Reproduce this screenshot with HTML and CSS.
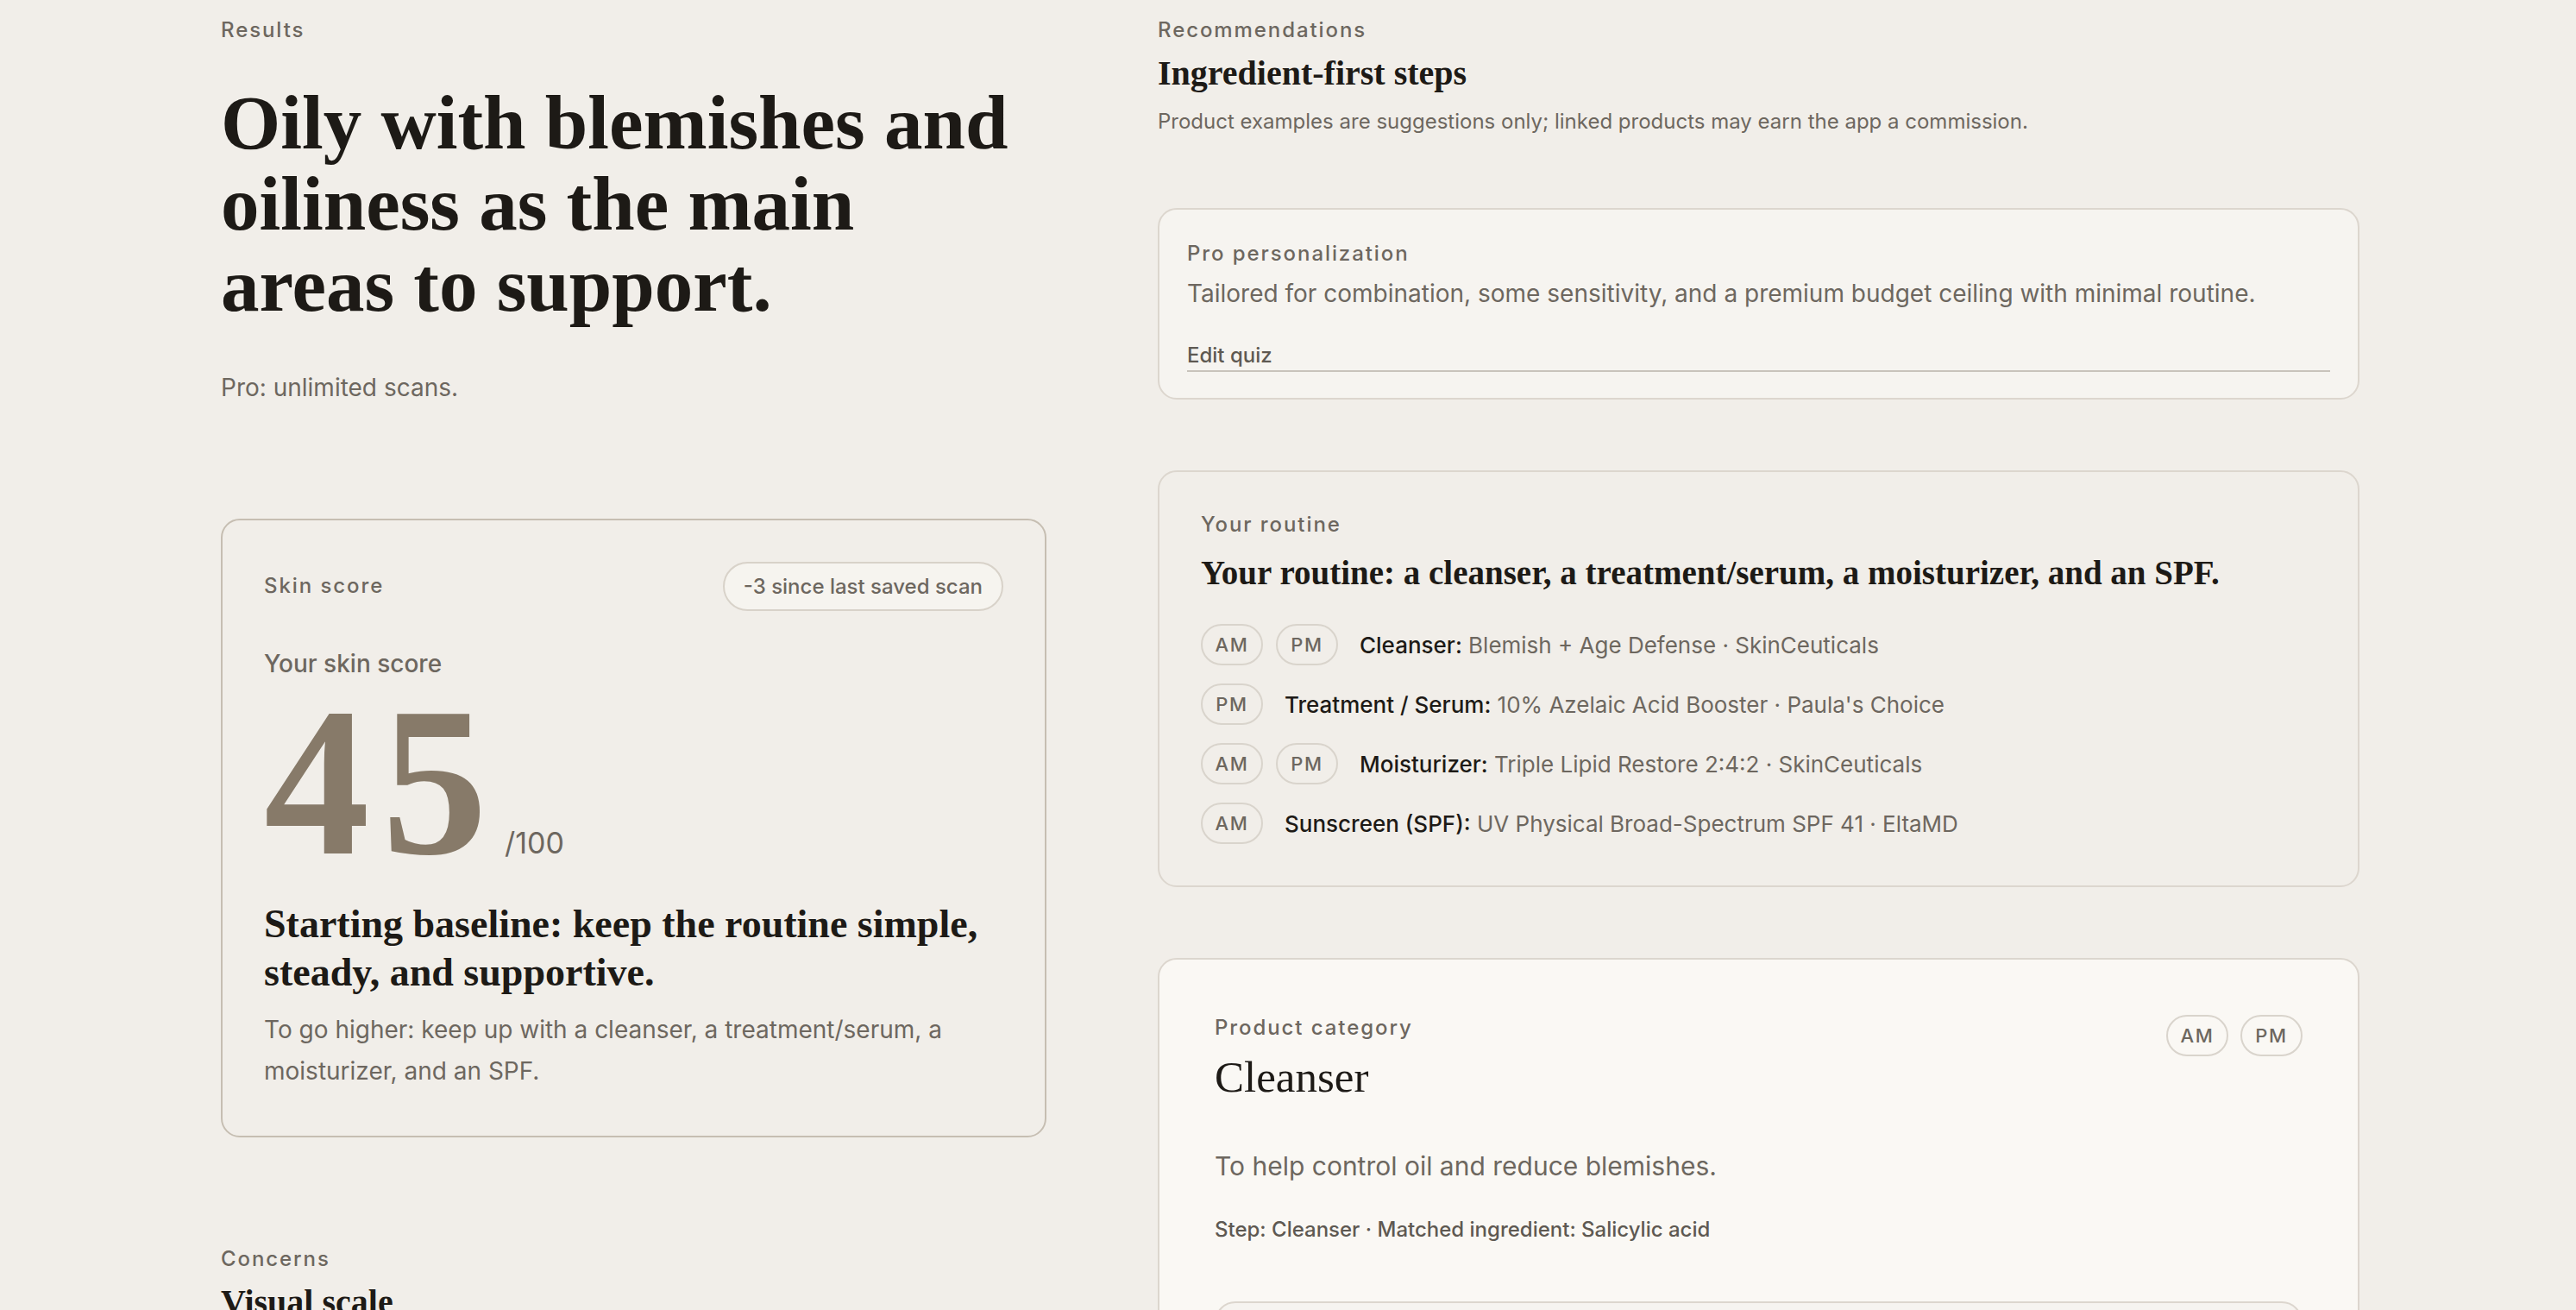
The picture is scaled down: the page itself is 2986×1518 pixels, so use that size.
FILE: index.html
```html
<!DOCTYPE html>
<html lang="en">
<head>
    <meta charset="UTF-8">
    <meta name="viewport" content="width=device-width, initial-scale=1.0">
    <title>Your Results</title>
    <link rel="stylesheet" href="styles.css">
</head>
<body>
    <main class="results-page">
        <!-- Left column: summary and score -->
        <section class="results-col">
            <header class="intro">
                <p class="eyebrow">Results</p>
                <h1 class="headline">Oily with blemishes and oiliness as the main areas to support.</h1>
                <p class="plan-note">Pro: unlimited scans.</p>
            </header>

            <article class="score-card">
                <div class="score-head">
                    <p class="eyebrow">Skin score</p>
                    <span class="chip">-3 since last saved scan</span>
                </div>
                <p class="score-label">Your skin score</p>
                <div class="score-value">
                    <span class="score-num">45</span>
                    <span class="score-max">/100</span>
                </div>
                <p class="score-summary">Starting baseline: keep the routine simple, steady, and supportive.</p>
                <p class="score-advice">To go higher: keep up with a cleanser, a treatment/serum, a moisturizer, and an SPF.</p>
            </article>

            <section class="concerns">
                <p class="eyebrow">Concerns</p>
                <h2 class="section-title">Visual scale</h2>
            </section>
        </section>

        <!-- Right column: recommendations -->
        <section class="recs-col">
            <header class="recs-head">
                <p class="eyebrow">Recommendations</p>
                <h2 class="section-title">Ingredient-first steps</h2>
                <p class="disclosure">Product examples are suggestions only; linked products may earn the app a commission.</p>
            </header>

            <div class="pro-card">
                <p class="eyebrow">Pro personalization</p>
                <p class="pro-text">Tailored for combination, some sensitivity, and a premium budget ceiling with minimal routine.</p>
                <a class="edit-link" href="#">Edit quiz</a>
            </div>

            <div class="routine-card">
                <p class="eyebrow">Your routine</p>
                <h3 class="routine-title">Your routine: a cleanser, a treatment/serum, a moisturizer, and an SPF.</h3>
                <ul class="routine-list">
                    <li class="routine-row">
                        <span class="times"><span class="pill">AM</span><span class="pill">PM</span></span>
                        <span class="step"><strong>Cleanser:</strong> Blemish + Age Defense · SkinCeuticals</span>
                    </li>
                    <li class="routine-row">
                        <span class="times"><span class="pill">PM</span></span>
                        <span class="step"><strong>Treatment / Serum:</strong> 10% Azelaic Acid Booster · Paula's Choice</span>
                    </li>
                    <li class="routine-row">
                        <span class="times"><span class="pill">AM</span><span class="pill">PM</span></span>
                        <span class="step"><strong>Moisturizer:</strong> Triple Lipid Restore 2:4:2 · SkinCeuticals</span>
                    </li>
                    <li class="routine-row">
                        <span class="times"><span class="pill">AM</span></span>
                        <span class="step"><strong>Sunscreen (SPF):</strong> UV Physical Broad-Spectrum SPF 41 · EltaMD</span>
                    </li>
                </ul>
            </div>

            <article class="product-card">
                <div class="product-head">
                    <div>
                        <p class="eyebrow">Product category</p>
                        <h3 class="product-title">Cleanser</h3>
                    </div>
                    <span class="times"><span class="pill">AM</span><span class="pill">PM</span></span>
                </div>
                <p class="product-why">To help control oil and reduce blemishes.</p>
                <p class="product-meta">Step: Cleanser · Matched ingredient: Salicylic acid</p>
                <div class="product-pick">
                    <p class="eyebrow">Example product</p>
                    <p class="pick-name">Blemish + Age Defense</p>
                    <p class="pick-brand">SkinCeuticals</p>
                </div>
            </article>
        </section>
    </main>
</body>
</html>
```

FILE: styles.css
```css
body {
    margin: 0;
    background-color: #f1eee9;
    color: #1d1a16;
    font-family: 'Inter', 'Noto Sans', sans-serif;
}
p, h1, h2, h3, ul {
    margin: 0;
    padding: 0;
}
.results-page {
    max-width: 2479px;
    margin: 0 auto;
    padding: 18px 0 0 5px;
    display: grid;
    grid-template-columns: 957px 1fr;
    column-gap: 129px;
    align-items: start;
}

/* shared text */
.eyebrow {
    font-size: 24px;
    line-height: 1.4;
    font-weight: 500;
    letter-spacing: 0.08em;
    color: #6d675f;
}
.section-title {
    margin-top: 9px;
    font-family: 'Liberation Serif', serif;
    font-size: 40px;
    line-height: 1.2;
    font-weight: 700;
    color: #1d1a16;
}

/* left column */
.results-col {
    display: flex;
    flex-direction: column;
    gap: 124px;
}
.intro {
    margin-bottom: 8px;
}
.headline {
    max-width: 940px;
    margin-top: 43px;
    font-family: 'Liberation Serif', serif;
    font-size: 89px;
    line-height: 1.06;
    font-weight: 700;
    color: #1d1a16;
}
.plan-note {
    margin-top: 52px;
    font-size: 28px;
    line-height: 1.4;
    color: #6d675f;
}
.score-card {
    border: 2px solid #c6beb2;
    border-radius: 22px;
    padding: 48px 48px 51px;
}
.score-head {
    display: flex;
    justify-content: space-between;
    align-items: center;
}
.chip {
    height: 57px;
    box-sizing: border-box;
    display: inline-flex;
    align-items: center;
    padding: 0 22px;
    border: 2px solid #d8d2c9;
    border-radius: 999px;
    background-color: #f6f4ef;
    font-size: 24px;
    font-weight: 500;
    color: #6d675f;
}
.score-label {
    margin-top: 42px;
    font-size: 28px;
    line-height: 1.4;
    font-weight: 500;
    color: #6d675f;
}
.score-value {
    margin-top: 20px;
    display: flex;
    align-items: baseline;
    gap: 6px;
}
.score-num {
    font-family: 'Liberation Serif', serif;
    font-size: 245px;
    line-height: 0.8;
    font-weight: 700;
    letter-spacing: 14px;
    color: #877a69;
}
.score-max {
    font-size: 34px;
    line-height: 1;
    color: #6d675f;
}
.score-summary {
    margin-top: 38px;
    font-family: 'Liberation Serif', serif;
    font-size: 46px;
    line-height: 56px;
    font-weight: 700;
}
.score-advice {
    margin-top: 14px;
    font-size: 28px;
    line-height: 48px;
    color: #6d675f;
}

/* right column */
.recs-col {
    display: flex;
    flex-direction: column;
    gap: 82px;
}
.disclosure {
    margin-top: 14px;
    font-size: 24px;
    line-height: 1.5;
    color: #6d675f;
}
.pro-card {
    border: 2px solid #dcd6ce;
    border-radius: 22px;
    background-color: #f6f4f0;
    padding: 34px 32px 30px;
}
.pro-text {
    margin-top: 9px;
    font-size: 28px;
    line-height: 1.5;
    color: #6d675f;
}
.edit-link {
    display: block;
    margin-top: 34px;
    font-size: 24px;
    line-height: 1.4;
    font-weight: 500;
    color: #5e5952;
    text-decoration: none;
    border-bottom: 2px solid #c8c3bb;
}
.routine-card {
    border: 2px solid #dcd6ce;
    border-radius: 22px;
    padding: 44px 48px 48px;
}
.routine-title {
    margin-top: 17px;
    font-family: 'Liberation Serif', serif;
    font-size: 39px;
    line-height: 1.2;
    font-weight: 700;
}
.routine-list {
    list-style: none;
    margin-top: 35px;
    display: flex;
    flex-direction: column;
    gap: 21px;
}
.routine-row {
    display: flex;
    align-items: center;
    gap: 25px;
}
.times {
    display: flex;
    gap: 15px;
}
.pill {
    height: 48px;
    min-width: 72px;
    box-sizing: border-box;
    display: inline-flex;
    align-items: center;
    justify-content: center;
    padding: 0 14px;
    border: 2px solid #d9d4cc;
    border-radius: 999px;
    font-size: 22px;
    font-weight: 500;
    letter-spacing: 0.08em;
    color: #6d675f;
}
.step {
    font-size: 26px;
    color: #6d675f;
}
.step strong {
    font-weight: 500;
    color: #1d1a16;
}
.product-card {
    border: 2px solid #dcd6ce;
    border-radius: 22px;
    background-color: #faf8f4;
    padding: 62px 64px;
}
.product-head {
    display: flex;
    justify-content: space-between;
    align-items: flex-start;
}
.product-head .times {
    gap: 14px;
    margin-top: 2px;
}
.product-title {
    margin-top: 10px;
    font-family: 'Liberation Serif', serif;
    font-size: 51px;
    line-height: 1.2;
    font-weight: 400;
}
.product-why {
    margin-top: 50px;
    font-size: 30px;
    line-height: 1.5;
    color: #6d675f;
}
.product-meta {
    margin-top: 34px;
    font-size: 24px;
    line-height: 1.4;
    font-weight: 500;
    color: #5e5952;
}
.product-pick {
    margin-top: 66px;
    border: 2px solid #dcd6ce;
    border-radius: 24px;
    background-color: #f6f4f0;
    padding: 32px;
}
.pick-name {
    margin-top: 10px;
    font-size: 28px;
    font-weight: 500;
}
.pick-brand {
    font-size: 24px;
    color: #6d675f;
}
```
